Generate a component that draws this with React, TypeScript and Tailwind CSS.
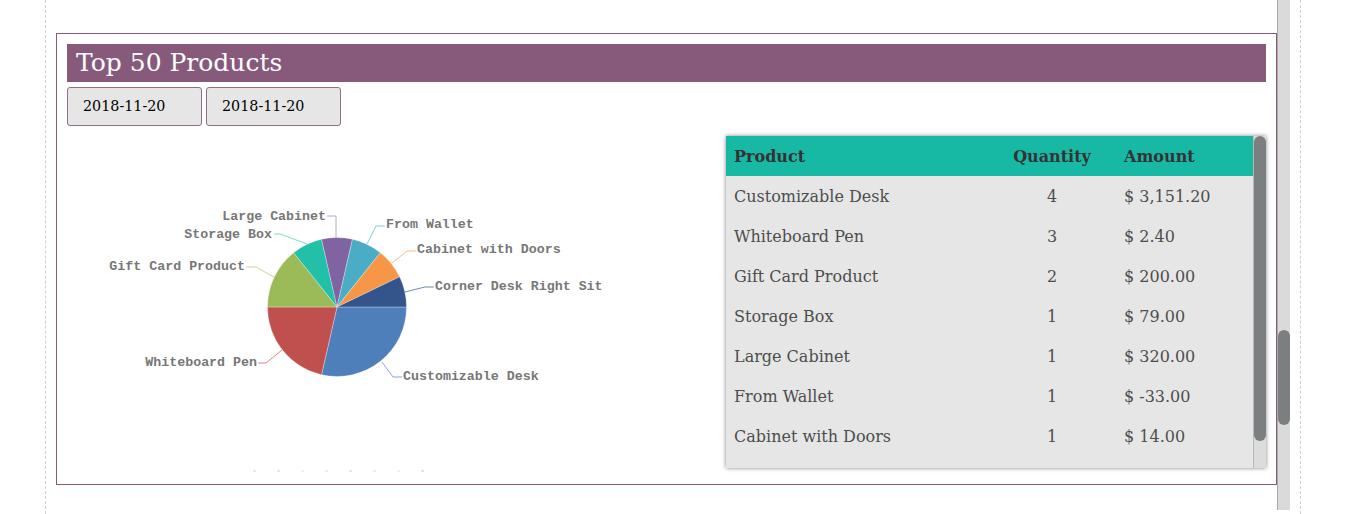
const rows = [
  { name: 'Customizable Desk', qty: 4, amount: '$ 3,151.20' },
  { name: 'Whiteboard Pen', qty: 3, amount: '$ 2.40' },
  { name: 'Gift Card Product', qty: 2, amount: '$ 200.00' },
  { name: 'Storage Box', qty: 1, amount: '$ 79.00' },
  { name: 'Large Cabinet', qty: 1, amount: '$ 320.00' },
  { name: 'From Wallet', qty: 1, amount: '$ -33.00' },
  { name: 'Cabinet with Doors', qty: 1, amount: '$ 14.00' },
  { name: 'Corner Desk Right Sit', qty: 1, amount: '$ 60.00' },
];

const slices = [
  { name: 'Customizable Desk', color: '#4e7fbb', line: '#8aa7d3', anchor: 'start', tx: 403, ty: 380, pts: '402,377 393,377 382,362' },
  { name: 'Whiteboard Pen', color: '#c0504d', line: '#d68886', anchor: 'end', tx: 257, ty: 366, pts: '258,363 266,363 282,350' },
  { name: 'Gift Card Product', color: '#9bbb59', line: '#c8d99e', anchor: 'end', tx: 245, ty: 270, pts: '246,267 256,267 274,277' },
  { name: 'Storage Box', color: '#22bfa9', line: '#7fd8cb', anchor: 'end', tx: 272, ty: 238, pts: '274,234 280,234 307,244' },
  { name: 'Large Cabinet', color: '#8064a2', line: '#b7a6cc', anchor: 'end', tx: 326, ty: 220, pts: '327,216 336,216 336,238' },
  { name: 'From Wallet', color: '#4bacc6', line: '#8acbdc', anchor: 'start', tx: 386, ty: 228, pts: '385,226 376,226 367,244' },
  { name: 'Cabinet with Doors', color: '#f79646', line: '#f9b98a', anchor: 'start', tx: 417, ty: 253, pts: '416,251 407,251 392,263' },
  { name: 'Corner Desk Right Sit', color: '#34558b', line: '#7088b0', anchor: 'start', tx: 435, ty: 290, pts: '434,287 425,287 405,292' },
];

const legendColors = ['#c3d2e8', '#e8c3c2', '#dde8c8', '#c0ebe4', '#d5cce2', '#c5e4ee', '#fbd9bf', '#c0c9dc'];

function arcPath(cx: number, cy: number, r: number, a0: number, a1: number) {
  const rad = (d: number) => (d * Math.PI) / 180;
  const x0 = cx + r * Math.cos(rad(a0));
  const y0 = cy + r * Math.sin(rad(a0));
  const x1 = cx + r * Math.cos(rad(a1));
  const y1 = cy + r * Math.sin(rad(a1));
  const large = a1 - a0 > 180 ? 1 : 0;
  return `M${cx},${cy} L${x0},${y0} A${r},${r} 0 ${large} 1 ${x1},${y1} Z`;
}

function PieChart() {
  const total = rows.reduce((s, r) => s + r.qty, 0);
  let angle = 0;
  return (
    <svg width="659" height="339" viewBox="67 136 659 339">
      {slices.map((s, i) => {
        const sweep = (rows[i].qty / total) * 360;
        const d = arcPath(337, 307, 69.5, angle, angle + sweep);
        angle += sweep;
        return <path key={s.name} d={d} fill={s.color} stroke="#ffffff" strokeOpacity="0.5" strokeWidth="0.6" />;
      })}
      {slices.map((s) => (
        <g key={`l-${s.name}`}>
          <polyline points={s.pts} fill="none" stroke={s.line} strokeWidth="1" />
          <text
            x={s.tx}
            y={s.ty}
            textAnchor={s.anchor as 'start' | 'end'}
            fill="#777777"
            fontSize="13.3"
            fontWeight="bold"
            fontFamily="'Liberation Mono', monospace"
          >
            {s.name}
          </text>
        </g>
      ))}
      {legendColors.map((c, i) => (
        <rect key={c + i} x={253 + i * 24} y={470.5} width="3" height="1" fill={c} />
      ))}
    </svg>
  );
}

function ProductTable() {
  // only the rows that fit above the fold are shown
  const visible = rows.slice(0, 7);
  return (
    <div className="relative flex h-[332px] w-[540px] overflow-hidden bg-[#e6e6e6] shadow-[0_0_4px_rgba(0,0,0,0.5)]">
      <div className="w-[527px] text-[16px] font-['DejaVu_Serif',serif]">
        <div className="flex h-[40px] items-center bg-[#17b9a5] pt-[2px] font-bold text-[#333333]">
          <div className="w-[274px] pl-[8px]">Product</div>
          <div className="w-[104px] text-center">Quantity</div>
          <div className="pl-[20px]">Amount</div>
        </div>
        {visible.map((r) => (
          <div key={r.name} className="flex h-[40px] items-center pt-[2px] text-[#4d4d4d]">
            <div className="w-[274px] pl-[8px]">{r.name}</div>
            <div className="w-[104px] text-center">{r.qty}</div>
            <div className="pl-[20px]">{r.amount}</div>
          </div>
        ))}
      </div>
      <div className="relative h-full w-[13px] border-l border-[#b8b8b8] bg-[#dcdcdc]">
        <div className="absolute left-0 top-0 h-[305px] w-[12px] rounded-full bg-[#7b7f7f]" />
      </div>
    </div>
  );
}

export default function App() {
  return (
    <div className="flex h-[514px] w-[1352px] overflow-hidden bg-white">
      <div className="w-[45px]" />
      <div className="flex h-full border-l border-dashed border-[#cfcfcf]">
        <div className="w-[1231px] pl-[10px] pt-[33px]">
          <div className="h-[452px] w-[1221px] border border-[#875a7b] p-[10px]">
            <div className="h-[38px] bg-[#875a7b] pl-[9px] text-[25px] leading-[38px] text-white font-['DejaVu_Serif',serif]">
              Top 50 Products
            </div>
            <div className="mt-[5px] flex gap-[4px]">
              {['2018-11-20', '2018-11-20'].map((d, i) => (
                <div
                  key={i}
                  className="flex h-[39px] w-[135px] items-center rounded-[3px] border border-[#8f7088] bg-[#e6e6e6] pl-[15px] text-[14.3px] text-black font-['DejaVu_Serif',serif]"
                >
                  {d}
                </div>
              ))}
            </div>
            <div className="mt-[10px] flex">
              <div className="w-[659px]">
                <PieChart />
              </div>
              <ProductTable />
            </div>
          </div>
        </div>
        <div className="relative h-[510px] w-[13px] border-l border-[#aaaaaa] bg-[#dadada]">
          <div className="absolute left-0 top-[330px] h-[95px] w-[12px] rounded-full bg-[#7b7f7f]" />
        </div>
      </div>
      <div className="ml-[10px] h-full border-l border-dashed border-[#cfcfcf]" />
    </div>
  );
}
